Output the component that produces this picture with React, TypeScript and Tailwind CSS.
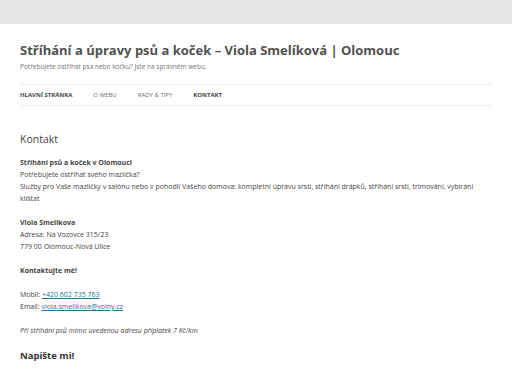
import React from 'react';

const App: React.FC = () => {
  const nav = [
    { label: 'Hlavní stránka', bold: true },
    { label: 'O webu', bold: false },
    { label: 'Rady & tipy', bold: false },
    { label: 'Kontakt', bold: true },
  ];

  return (
    <div className="min-h-[384px] bg-white text-[#444]" style={{ fontFamily: '"Open Sans", sans-serif' }}>
      <div className="h-6 bg-[#e6e6e6]"></div>
      <div className="px-5">
        <header className="pt-[17px]">
          <h1 className="text-[13px] font-bold leading-[18px] text-[#515151]">
            Stříhání a úpravy psů a koček – Viola Smelíková | Olomouc
          </h1>
          <p className="mt-[2px] text-[6.5px] leading-[12px] text-[#757575]">
            Potřebujete ostříhat psa nebo kočku? Jste na správném webu.
          </p>
          <nav className="mt-[11px] mr-[1px] border-y border-[#ededed] h-[22px] flex items-center gap-[21px]">
            {nav.map((item, i) => (
              <span
                key={i}
                className={
                  item.bold
                    ? 'text-[6px] uppercase font-bold text-[#444]'
                    : 'text-[6px] uppercase text-[#6a6a6a]'
                }
              >
                {item.label}
              </span>
            ))}
          </nav>
        </header>

        <main className="pt-[25px] text-[7px] leading-[12px]">
          <h2 className="text-[10.5px] leading-[16px] font-normal text-[#444] mb-[10px]">Kontakt</h2>

          <p className="mb-[12px]">
            <strong className="font-bold">Stříhání psů a koček v Olomouci</strong>
            <br />
            Potřebujete ostříhat svého mazlíčka?
            <br />
            Služby pro Vaše mazlíčky v salónu nebo v pohodlí Vašeho domova: kompletní úpravu srsti, stříhání drápků, stříhání srsti, trimování, vybírání klíštat
          </p>

          <p className="mb-[12px]">
            <strong className="font-bold">Viola Smelikova</strong>
            <br />
            Adresa: Na Vozovce 315/23
            <br />
            779 00 Olomouc-Nová Ulice
          </p>

          <p className="mb-[12px]">
            <strong className="font-bold">Kontaktujte mě!</strong>
            <br />
            <br />
            Mobil: <a href="#" className="text-[#21759b] underline">+420 602 735 763</a>
            <br />
            Email: <a href="#" className="text-[#21759b] underline">viola.smelikova@volny.cz</a>
          </p>

          <p className="mb-[12px] italic">Při stříhání psů mimo uvedenou adresu příplatek 7 Kč/km</p>

          <h2 className="text-[9.5px] font-bold leading-[14px] text-[#333]">Napište mi!</h2>
        </main>
      </div>
    </div>
  );
};

export default App;
